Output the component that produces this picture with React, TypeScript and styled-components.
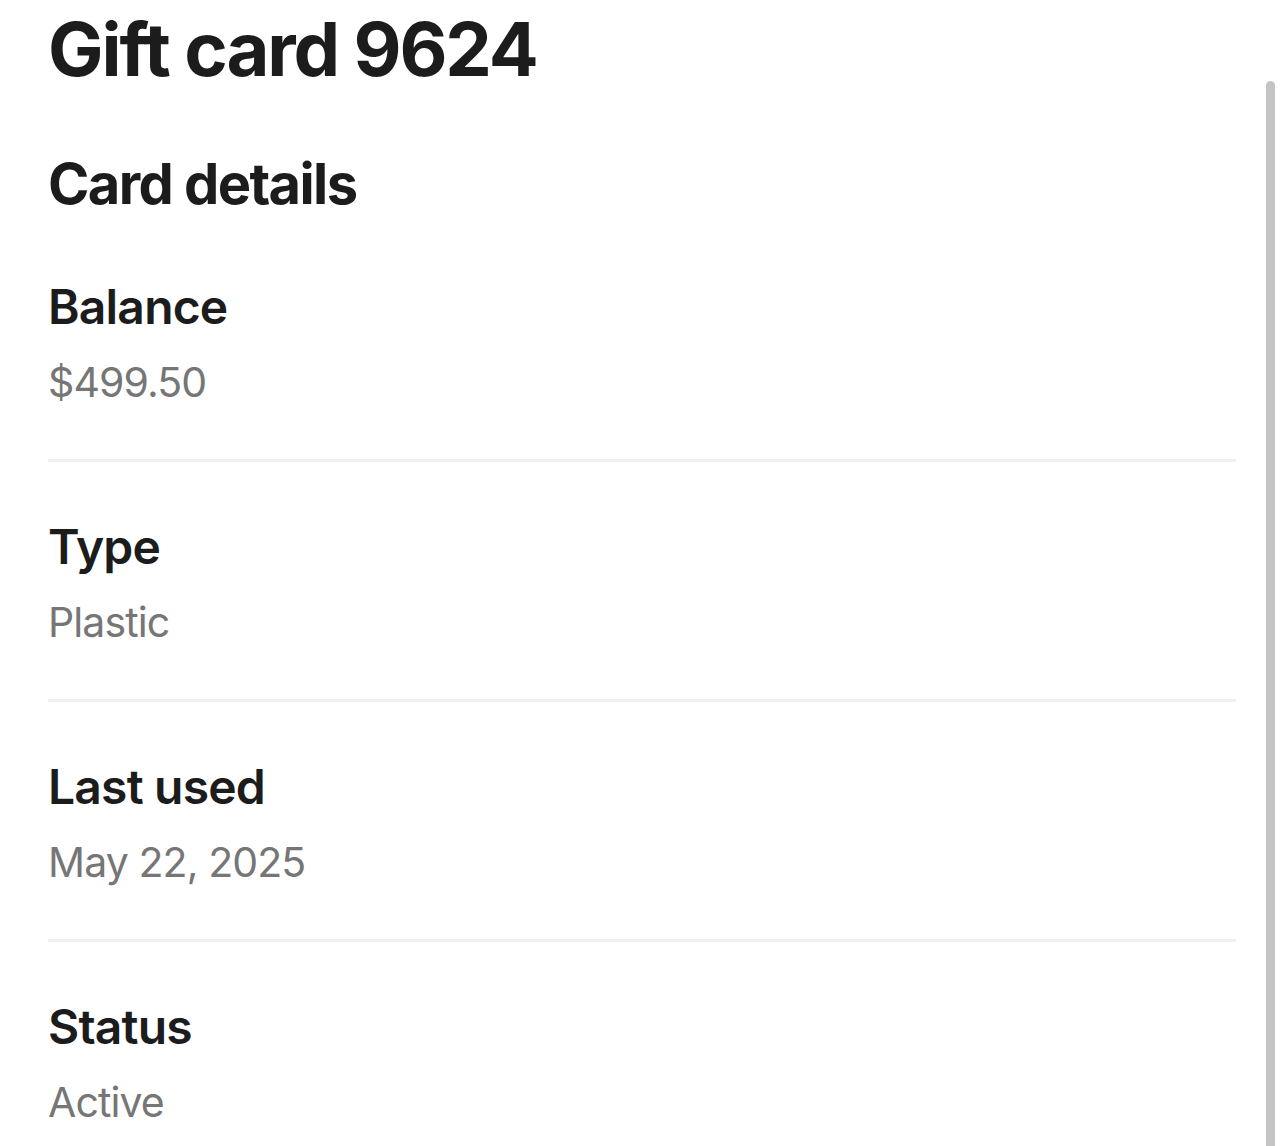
import React from "react";
import styled, { createGlobalStyle } from "styled-components";

const GlobalStyle = createGlobalStyle`
  html, body {
    margin: 0;
    padding: 0;
    background: #ffffff;
    overflow: hidden;
  }
  body {
    font-family: Inter, "Noto Sans", "Liberation Sans", sans-serif;
    color: #1c1c1c;
    -webkit-font-smoothing: antialiased;
  }
`;

const details = [
  { label: "Balance", value: "$499.50" },
  { label: "Type", value: "Plastic" },
  { label: "Last used", value: "May 22, 2025" },
  { label: "Status", value: "Active" },
];

const App = () => {
  return (
    <>
      <GlobalStyle />
      <Page>
        <Title>Gift card 9624</Title>
        <SectionTitle>Card details</SectionTitle>
        <List>
          {details.map((d, i) => (
            <Row key={d.label} $last={i === details.length - 1}>
              <Label>{d.label}</Label>
              <Value>{d.value}</Value>
            </Row>
          ))}
        </List>
      </Page>
      <ScrollThumb />
    </>
  );
};

export default App;

const Page = styled.div`
  padding: 5px 48px 0 48px;
  display: flex;
  flex-direction: column;
`;

const Title = styled.h1`
  margin: 0;
  font-size: 74px;
  line-height: 88px;
  font-weight: 700;
  letter-spacing: -2.1px;
`;

const SectionTitle = styled.h2`
  margin: 57px 0 4px 0;
  font-size: 56px;
  line-height: 68px;
  font-weight: 700;
  letter-spacing: -1.6px;
`;

const List = styled.div`
  display: flex;
  flex-direction: column;
`;

const Row = styled.div<{ $last?: boolean }>`
  display: flex;
  flex-direction: column;
  gap: 21px;
  padding: 56px 0 52px 0;
  border-bottom: 3px solid ${(p) => (p.$last ? "transparent" : "#efefef")};
`;

const Label = styled.div`
  font-size: 48px;
  line-height: 58px;
  font-weight: 600;
  letter-spacing: -0.8px;
`;

const Value = styled.div`
  font-size: 41px;
  line-height: 50px;
  font-weight: 400;
  color: #767676;
  letter-spacing: -0.9px;
`;

const ScrollThumb = styled.div`
  position: fixed;
  top: 81px;
  right: 9px;
  width: 9px;
  bottom: 0;
  background: #c4c4c4;
  border-radius: 5px 5px 0 0;
`;
